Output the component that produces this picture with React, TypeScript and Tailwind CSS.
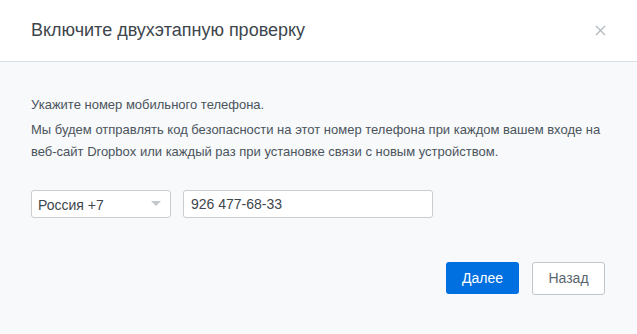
import React from 'react';

export default function App() {
  return (
    <div className="w-[637px] h-[334px] flex flex-col bg-[#f7f9fb] font-['Liberation_Sans',Arial,sans-serif]">
      <div className="h-[62px] shrink-0 bg-white border-b border-[#dcdfe3] flex items-center justify-between pl-[31px] pr-[31px]">
        <h1 className="text-[18px] text-[#3d464d]">Включите двухэтапную проверку</h1>
        <button className="text-[#b4bcc2]">
          <svg width="11" height="11" viewBox="0 0 11 11">
            <path d="M1 1L10 10M10 1L1 10" stroke="currentColor" strokeWidth="1.4" />
          </svg>
        </button>
      </div>
      <div className="flex-1 flex flex-col px-[31px] pt-[34px]">
        <p className="text-[13px] leading-[18px] text-[#4b545b]">Укажите номер мобильного телефона.</p>
        <p className="mt-[5px] text-[13px] leading-[22px] text-[#4b545b]">
          Мы будем отправлять код безопасности на этот номер телефона при каждом вашем входе на веб-сайт Dropbox или каждый раз при установке связи с новым устройством.
        </p>
        <div className="mt-[27px] flex gap-[12px]">
          <div className="w-[140px] h-[28px] bg-white border border-[#c9cdd1] rounded-[3px] flex items-center justify-between pl-[6px] pr-[9px]">
            <span className="text-[14px] text-[#3d464d] mt-[2px]">Россия +7</span>
            <svg width="10" height="6" viewBox="0 0 10 6"><path d="M0 0H10L5 5Z" fill="#c3c8cc" /></svg>
          </div>
          <div className="w-[250px] h-[28px] bg-white border border-[#c9cdd1] rounded-[3px] flex items-center pl-[7px]">
            <span className="text-[14px] text-[#3d464d]">926 477-68-33</span>
          </div>
        </div>
        <div className="mt-[44px] flex justify-end gap-[13px] pr-[1px]">
          <button className="w-[73px] h-[32px] bg-[#0070e0] rounded-[3px] text-white text-[14px]">Далее</button>
          <button className="w-[73px] h-[33px] bg-white border border-[#c0c5ca] rounded-[3px] text-[#5b656c] text-[14px]">Назад</button>
        </div>
      </div>
    </div>
  );
}
